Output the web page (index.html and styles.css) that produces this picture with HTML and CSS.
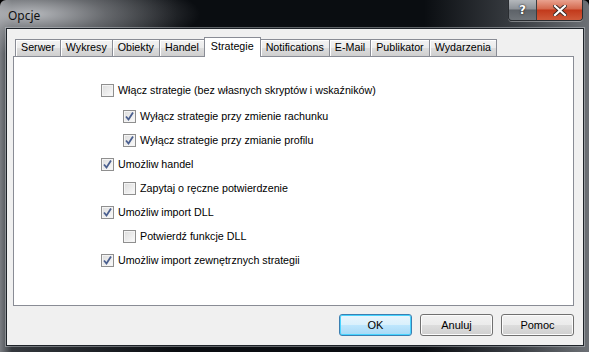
FILE: index.html
```html
<!DOCTYPE html>
<html lang="pl">
<head>
  <meta charset="UTF-8">
  <title>Opcje</title>
  <link rel="stylesheet" href="styles.css">
</head>
<body>
  <div class="window">
    <div class="titlebar">
      <span class="title">Opcje</span>
      <div class="caption-buttons">
        <div class="cap-btn help">?</div>
        <div class="cap-btn close">
          <svg width="14" height="11" viewBox="0 0 14 11">
            <path d="M2 1 L12 10 M12 1 L2 10" stroke="#3a2a26" stroke-width="4" stroke-linecap="square"/>
            <path d="M2 1 L12 10 M12 1 L2 10" stroke="#fff" stroke-width="2.2" stroke-linecap="square"/>
          </svg>
        </div>
      </div>
    </div>

    <div class="client">
      <div class="tabs">
        <div class="tab">Serwer</div>
        <div class="tab">Wykresy</div>
        <div class="tab">Obiekty</div>
        <div class="tab">Handel</div>
        <div class="tab active">Strategie</div>
        <div class="tab">Notifications</div>
        <div class="tab">E-Mail</div>
        <div class="tab">Publikator</div>
        <div class="tab">Wydarzenia</div>
      </div>

      <div class="panel">
        <label class="check first"><span class="box"></span>Włącz strategie (bez własnych skryptów i wskaźników)</label>
        <label class="check sub"><span class="box checked"></span>Wyłącz strategie przy zmienie rachunku</label>
        <label class="check sub"><span class="box checked"></span>Wyłącz strategie przy zmianie profilu</label>
        <label class="check"><span class="box checked"></span>Umożliw handel</label>
        <label class="check sub"><span class="box"></span>Zapytaj o ręczne potwierdzenie</label>
        <label class="check"><span class="box checked"></span>Umożliw import DLL</label>
        <label class="check sub"><span class="box"></span>Potwierdź funkcje DLL</label>
        <label class="check"><span class="box checked"></span>Umożliw import zewnętrznych strategii</label>
      </div>

      <div class="buttons">
        <button class="btn default">OK</button>
        <button class="btn">Anuluj</button>
        <button class="btn">Pomoc</button>
      </div>
    </div>
  </div>
</body>
</html>
```

FILE: styles.css
```css
* {
  box-sizing: border-box;
}
body {
  margin: 0;
  background: #000;
  font-family: "Liberation Sans", Arial, sans-serif;
  font-size: 10.7px;
  color: #000;
}
.window {
  width: 589px;
  height: 352px;
  display: flex;
  flex-direction: column;
  background:
    radial-gradient(ellipse 170px 40px at 30px 14px, rgba(190,192,196,0.95), rgba(150,152,156,0.6) 45%, rgba(0,0,0,0) 100%),
    linear-gradient(90deg, #7a7d82 0, #34383d 2%, #0a0d11 30%, #0a0d11 72%, #3b3f44 88%, #6c7075 100%);
  border-radius: 6px 6px 0 0;
  overflow: hidden;
}
.titlebar {
  height: 28px;
  flex: none;
  display: flex;
  justify-content: space-between;
  align-items: flex-start;
}
.title {
  font-family: "Noto Sans", "Open Sans", sans-serif;
  font-size: 12px;
  color: #111;
  padding: 7px 0 0 8px;
}
.caption-buttons {
  display: flex;
  margin-right: 6px;
  border: 1px solid #2a2d31;
  border-top: none;
  border-radius: 0 0 4px 4px;
  overflow: hidden;
  box-shadow: 0 1px 0 rgba(255,255,255,0.35);
}
.cap-btn {
  height: 20px;
  display: flex;
  align-items: center;
  justify-content: center;
}
.help {
  width: 28px;
  border-right: 1px solid #3a3d41;
  background: linear-gradient(#b4b8bc 0, #8d9298 45%, #5d6268 50%, #6f7479 100%);
  color: #fff;
  font-family: "DejaVu Sans", sans-serif;
  font-weight: bold;
  font-size: 12px;
  text-shadow: 0 0 2px #222, 0 0 1px #222;
}
.close {
  width: 45px;
  background: linear-gradient(#e9a28f 0, #d4684d 45%, #c2391b 50%, #cf5a3a 100%);
}
.client {
  flex: 1;
  margin: 0 5px 6px 6px;
  border: 1px solid #1d2228;
  background: #f0f0f0;
  box-shadow: 0 0 0 1px rgba(200,204,208,0.45);
  padding: 8px 9px 0 6px;
  display: flex;
  flex-direction: column;
}
.tabs {
  display: flex;
  align-items: flex-end;
  height: 19px;
  flex: none;
  padding-left: 2px;
  position: relative;
  z-index: 1;
}
.tab {
  height: 17px;
  line-height: 15px;
  padding: 0 5px;
  border: 1px solid #898c95;
  border-bottom: none;
  background: linear-gradient(#f3f3f3 0, #ebebeb 50%, #dddddd 51%, #cfcfcf 100%);
  box-shadow: inset 1px 1px 0 #fff;
  margin-right: -1px;
  white-space: nowrap;
}
.tab.active {
  height: 20px;
  line-height: 17px;
  padding: 0 6px;
  margin: 0 -1px -1px 0;
  background: #fff;
  box-shadow: none;
  position: relative;
}
.panel {
  height: 250px;
  flex: none;
  border: 1px solid #898c95;
  background: #fff;
  padding: 21px 0 0 87px;
  display: flex;
  flex-direction: column;
}
.check {
  display: flex;
  align-items: center;
  height: 24px;
  flex: none;
  white-space: nowrap;
}
.check.first {
  margin-bottom: 2px;
}
.check.sub {
  padding-left: 22px;
}
.box {
  width: 13px;
  height: 13px;
  margin-right: 4px;
  border: 1px solid #8f8f8f;
  background: linear-gradient(135deg, #dcdcdc 0, #eeeeee 60%, #fbfbfb 100%);
  box-shadow: inset 0 0 0 1px #f4f4f4;
  flex: none;
}
.box.checked {
  background:
    url("data:image/svg+xml;utf8,<svg xmlns='http://www.w3.org/2000/svg' width='11' height='11'><path d='M2 5.5 L4.5 8.5 L9 1.5' fill='none' stroke='%234a5f8f' stroke-width='1.8'/></svg>") no-repeat center,
    linear-gradient(135deg, #dcdcdc 0, #eeeeee 60%, #fbfbfb 100%);
}
.buttons {
  display: flex;
  justify-content: flex-end;
  gap: 8px;
  margin-top: 8px;
}
.btn {
  width: 73px;
  height: 22px;
  font-family: "Liberation Sans", Arial, sans-serif;
  font-size: 11px;
  color: #000;
  border: 1px solid #707070;
  border-radius: 3px;
  background: linear-gradient(#f2f2f2 0, #ebebeb 50%, #dddddd 51%, #cfcfcf 100%);
  box-shadow: inset 0 0 0 1px #fcfcfc;
  padding: 0;
}
.btn.default {
  border-color: #3c7fb1;
  background: linear-gradient(#eaf6fd 0, #d9f0fc 50%, #bee6fd 51%, #a7d9f5 100%);
  box-shadow: inset 0 0 0 1px #48d4ff;
}
```
